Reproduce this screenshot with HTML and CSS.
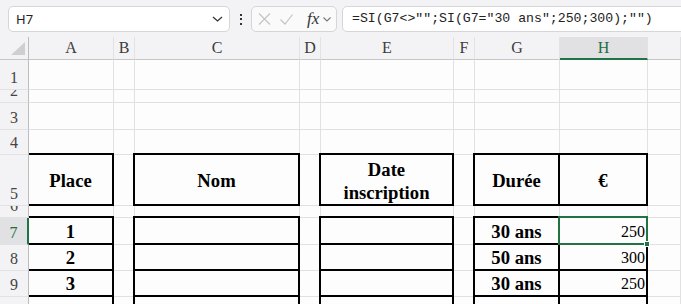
FILE: index.html
```html
<!DOCTYPE html>
<html lang="fr">
<head>
  <meta charset="UTF-8">
  <title>Classeur</title>
  <link rel="stylesheet" href="styles.css">
</head>
<body>
  <div class="toolbar">
    <div class="namebox">
      <span>H7</span>
      <svg width="11" height="6" viewBox="0 0 11 6"><path d="M1 1 L5.5 5 L10 1" fill="none" stroke="#333" stroke-width="1.3"/></svg>
    </div>
    <div class="kebab"><i></i><i></i><i></i></div>
    <div class="fxbox">
      <svg width="13" height="12" viewBox="0 0 13 12"><path d="M1 0.5 L12 11.5 M12 0.5 L1 11.5" stroke="#c4c4c4" stroke-width="1.2"/></svg>
      <svg width="13" height="11" viewBox="0 0 13 11"><path d="M0.5 5.5 L5 10 L12.5 0.5" fill="none" stroke="#c4c4c4" stroke-width="1.2"/></svg>
      <span class="fx">fx</span>
      <svg width="8" height="5" viewBox="0 0 8 5"><path d="M0.5 0.5 L4 4 L7.5 0.5" fill="none" stroke="#777" stroke-width="1.1"/></svg>
    </div>
    <div class="formula">=SI(G7&lt;&gt;"";SI(G7="30 ans";250;300);"")</div>
  </div>

  <div class="sheet">
    <!-- column headers -->
    <div class="ch corner"><svg width="14" height="13" viewBox="0 0 14 13"><polygon points="14,0 14,13 0,13" fill="#cfcfd1"/></svg></div>
    <div class="ch">A</div>
    <div class="ch">B</div>
    <div class="ch">C</div>
    <div class="ch">D</div>
    <div class="ch">E</div>
    <div class="ch">F</div>
    <div class="ch">G</div>
    <div class="ch ch-sel">H</div>
    <div class="ch"></div>

    <!-- row 1 -->
    <div class="rh">1</div>
    <div class="c"></div><div class="c"></div><div class="c"></div><div class="c"></div><div class="c"></div><div class="c"></div><div class="c"></div><div class="c"></div><div class="c"></div>
    <!-- row 2 (short row, number is clipped) -->
    <div class="rh">2</div>
    <div class="c"></div><div class="c"></div><div class="c"></div><div class="c"></div><div class="c"></div><div class="c"></div><div class="c"></div><div class="c"></div><div class="c"></div>
    <!-- row 3 -->
    <div class="rh">3</div>
    <div class="c"></div><div class="c"></div><div class="c"></div><div class="c"></div><div class="c"></div><div class="c"></div><div class="c"></div><div class="c"></div><div class="c"></div>
    <!-- row 4 -->
    <div class="rh">4</div>
    <div class="c"></div><div class="c"></div><div class="c"></div><div class="c"></div><div class="c"></div><div class="c"></div><div class="c"></div><div class="c"></div><div class="c"></div>

    <!-- row 5 : table headers -->
    <div class="rh">5</div>
    <div class="c bx first b">Place</div>
    <div class="c"></div>
    <div class="c bx b">Nom</div>
    <div class="c"></div>
    <div class="c bx b two">Date<br>inscription</div>
    <div class="c"></div>
    <div class="c bx b">Durée</div>
    <div class="c bx b">€</div>
    <div class="c"></div>

    <!-- row 6 (short row) -->
    <div class="rh">6</div>
    <div class="c"></div><div class="c"></div><div class="c"></div><div class="c"></div><div class="c"></div><div class="c"></div><div class="c"></div><div class="c"></div><div class="c"></div>

    <!-- row 7 -->
    <div class="rh rh-sel">7</div>
    <div class="c bx first b">1</div>
    <div class="c"></div>
    <div class="c bx"></div>
    <div class="c"></div>
    <div class="c bx"></div>
    <div class="c"></div>
    <div class="c bx b">30 ans</div>
    <div class="c bx num selected">250<span class="sel-frame"><span class="handle"></span></span></div>
    <div class="c"></div>

    <!-- row 8 -->
    <div class="rh">8</div>
    <div class="c bx first b">2</div>
    <div class="c"></div>
    <div class="c bx"></div>
    <div class="c"></div>
    <div class="c bx"></div>
    <div class="c"></div>
    <div class="c bx b">50 ans</div>
    <div class="c bx num">300</div>
    <div class="c"></div>

    <!-- row 9 -->
    <div class="rh">9</div>
    <div class="c bx first b">3</div>
    <div class="c"></div>
    <div class="c bx"></div>
    <div class="c"></div>
    <div class="c bx"></div>
    <div class="c"></div>
    <div class="c bx b">30 ans</div>
    <div class="c bx num">250</div>
    <div class="c"></div>

    <!-- row 10, only its top edge is visible -->
    <div class="rh"></div>
    <div class="c bx first"></div>
    <div class="c"></div>
    <div class="c bx"></div>
    <div class="c"></div>
    <div class="c bx"></div>
    <div class="c"></div>
    <div class="c bx"></div>
    <div class="c bx"></div>
    <div class="c"></div>
  </div>
</body>
</html>
```

FILE: styles.css
```css
html, body {
  margin: 0;
  height: 100%;
  overflow: hidden;
}
body {
  background-color: #fdfdfd;
  font-family: 'Liberation Serif', serif;
  color: #000;
}

/* formula bar */
.toolbar {
  height: 37px;
  box-sizing: border-box;
  padding: 6px 0 0 8px;
  display: flex;
  align-items: flex-start;
  background-color: #f3f2f5;
  overflow: hidden;
  white-space: nowrap;
}
.toolbar > div {
  flex: none;
}
.namebox {
  width: 222px;
  height: 26px;
  box-sizing: border-box;
  display: flex;
  align-items: center;
  justify-content: space-between;
  padding: 0 6px 0 7px;
  background-color: #fff;
  border: 1px solid #d6d6d8;
  border-radius: 5px;
  font-family: 'Noto Sans', sans-serif;
  font-size: 13px;
  color: #222;
}
.kebab {
  width: 21px;
  height: 26px;
  display: flex;
  flex-direction: column;
  align-items: center;
  justify-content: center;
  gap: 2.5px;
}
.kebab i {
  width: 2px;
  height: 2px;
  background-color: #333;
}
.fxbox {
  width: 86px;
  height: 26px;
  box-sizing: border-box;
  display: flex;
  align-items: center;
  padding-left: 6px;
  background-color: #fafafa;
  border: 1px solid #d6d6d8;
  border-radius: 5px;
}
.fxbox svg:nth-child(2) {
  margin-left: 9px;
}
.fx {
  margin-left: 14px;
  margin-right: 4px;
  font-family: 'Liberation Serif', serif;
  font-style: italic;
  font-size: 17px;
  color: #333;
}
.formula {
  margin-left: 5px;
  width: 380px;
  height: 26px;
  box-sizing: border-box;
  padding-left: 9px;
  line-height: 24px;
  background-color: #fff;
  border: 1px solid #d6d6d8;
  border-radius: 5px;
  font-family: 'Liberation Mono', monospace;
  font-size: 13.2px;
  color: #222;
}

/* sheet grid */
.sheet {
  display: grid;
  grid-template-columns: 29px 85px 21px 165px 21px 133px 21px 85px 88px 1fr;
  grid-template-rows: 23px 30px 13px 27px 25px 51px 12px 27px 26px 26px 30px;
}
.ch, .rh, .c {
  box-sizing: border-box;
  overflow: hidden;
  display: flex;
  justify-content: center;
}
.ch {
  align-items: center;
  background-color: #f3f2f5;
  border-right: 1px solid #e2e2e4;
  border-bottom: 1px solid #c6c6c8;
  font-size: 16px;
  color: #3c3c3c;
}
.corner {
  justify-content: flex-end;
  align-items: flex-end;
  padding: 0 3px 4px 0;
  border-right: 1px solid #bcbcbe;
}
.ch-sel {
  background-color: #e1e1e3;
  border-bottom: 2px solid #217346;
  color: #1e6e42;
}
.rh {
  align-items: flex-end;
  padding-bottom: 3px;
  line-height: 16px;
  background-color: #f3f2f5;
  border-right: 1px solid #bcbcbe;
  border-bottom: 1px solid #e2e2e4;
  font-size: 16px;
  color: #444;
}
.rh-sel {
  background-color: #e1e1e3;
  border-right: 2px solid #217346;
  color: #1e6e42;
}
.c {
  align-items: center;
  border-right: 1px solid #e1e1e1;
  border-bottom: 1px solid #e1e1e1;
  font-size: 16px;
}

/* thick table borders */
.bx {
  margin: -2px 0 0 -2px;
  padding-top: 2px;
  border: 2px solid #000;
}
.bx.first {
  margin-left: 0;
  border-left: none;
}
.b {
  font-weight: bold;
  font-size: 18.67px;
}
.two {
  text-align: center;
  line-height: 23px;
}
.num {
  justify-content: flex-end;
  padding-right: 1px;
}

/* active cell */
.selected {
  position: relative;
  overflow: visible;
}
.sel-frame {
  position: absolute;
  top: -2px;
  left: -2px;
  right: -2px;
  bottom: -2px;
  border: 2px solid #217346;
}
.handle {
  position: absolute;
  right: -4px;
  bottom: -4px;
  width: 6px;
  height: 6px;
  background-color: #217346;
  border: 1px solid #fff;
  box-sizing: border-box;
}
```
